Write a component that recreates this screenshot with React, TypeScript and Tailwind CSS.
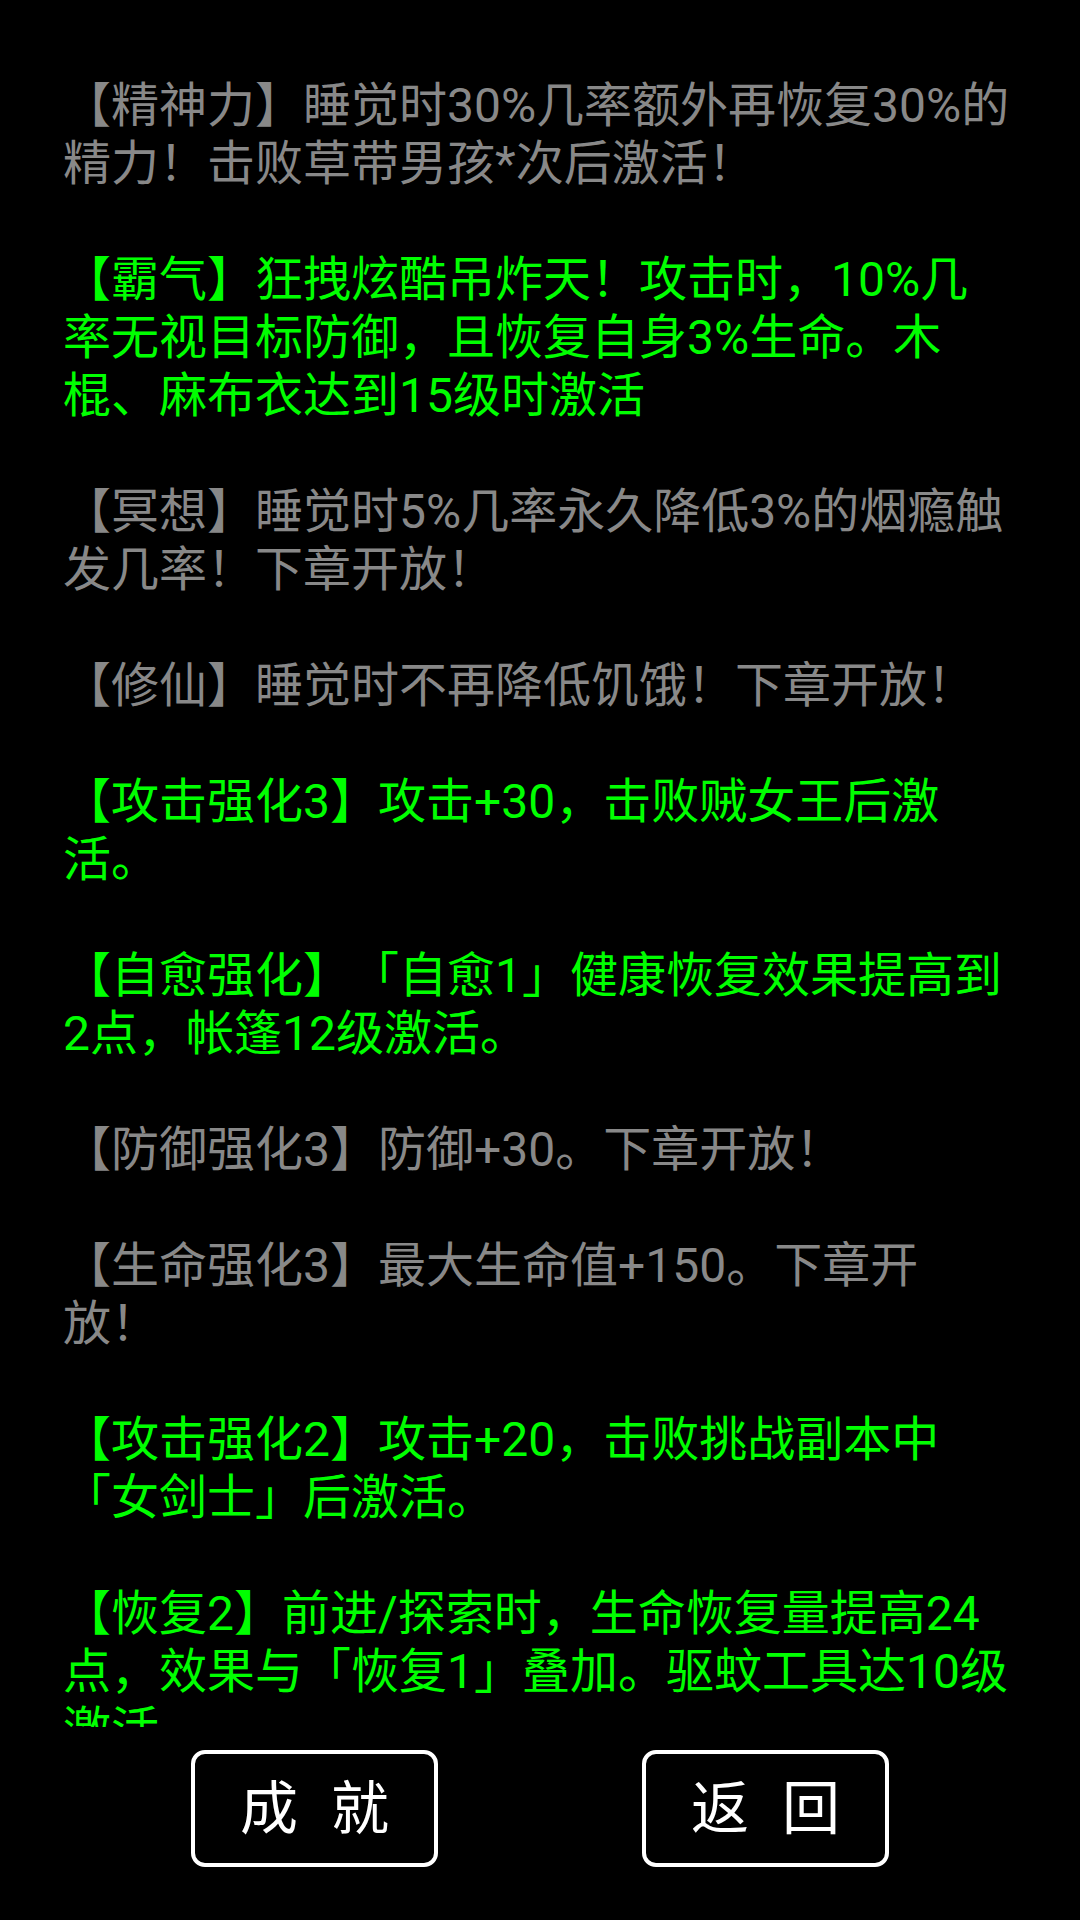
import React from 'react';

type Entry = { lines: string[]; active: boolean };

const entries: Entry[] = [
  { lines: ['【精神力】睡觉时30%几率额外再恢复30%的', '精力！击败草带男孩*次后激活！'], active: false },
  { lines: ['【霸气】狂拽炫酷吊炸天！攻击时，10%几', '率无视目标防御，且恢复自身3%生命。木', '棍、麻布衣达到15级时激活'], active: true },
  { lines: ['【冥想】睡觉时5%几率永久降低3%的烟瘾触', '发几率！下章开放！'], active: false },
  { lines: ['【修仙】睡觉时不再降低饥饿！下章开放！'], active: false },
  { lines: ['【攻击强化3】攻击+30，击败贼女王后激', '活。'], active: true },
  { lines: ['【自愈强化】「自愈1」健康恢复效果提高到', '2点，帐篷12级激活。'], active: true },
  { lines: ['【防御强化3】防御+30。下章开放！'], active: false },
  { lines: ['【生命强化3】最大生命值+150。下章开', '放！'], active: false },
  { lines: ['【攻击强化2】攻击+20，击败挑战副本中', '「女剑士」后激活。'], active: true },
  { lines: ['【恢复2】前进/探索时，生命恢复量提高24', '点，效果与「恢复1」叠加。驱蚊工具达10级', '激活。'], active: true },
];

function GameButton({ chars }: { chars: [string, string] }) {
  return (
    <button className="w-[247px] h-[117px] rounded-[14px] border-[4px] border-white bg-black flex items-center justify-center gap-[33px] text-white text-[58px] leading-none">
      <span>{chars[0]}</span>
      <span>{chars[1]}</span>
    </button>
  );
}

export default function App() {
  return (
    <div
      className="w-[1080px] h-[1920px] bg-black flex flex-col overflow-hidden"
      style={{ fontFamily: 'Roboto, "Noto Sans CJK SC", sans-serif' }}
    >
      {/* Skill list */}
      <div className="h-[1727px] overflow-hidden pt-[77px] pl-[63px] flex flex-col gap-[58px] [text-spacing-trim:space-all]">
        {entries.map((e, i) => (
          <p
            key={i}
            className={`text-[48px] leading-[58px] whitespace-nowrap ${e.active ? 'text-[#00ff00]' : 'text-[#888888]'}`}
          >
            {e.lines.map((l, j) => (
              <span key={j} className="block">{l}</span>
            ))}
          </p>
        ))}
      </div>

      {/* Bottom buttons */}
      <div className="mt-[23px] flex justify-center gap-[204px]">
        <GameButton chars={['成', '就']} />
        <GameButton chars={['返', '回']} />
      </div>
    </div>
  );
}
